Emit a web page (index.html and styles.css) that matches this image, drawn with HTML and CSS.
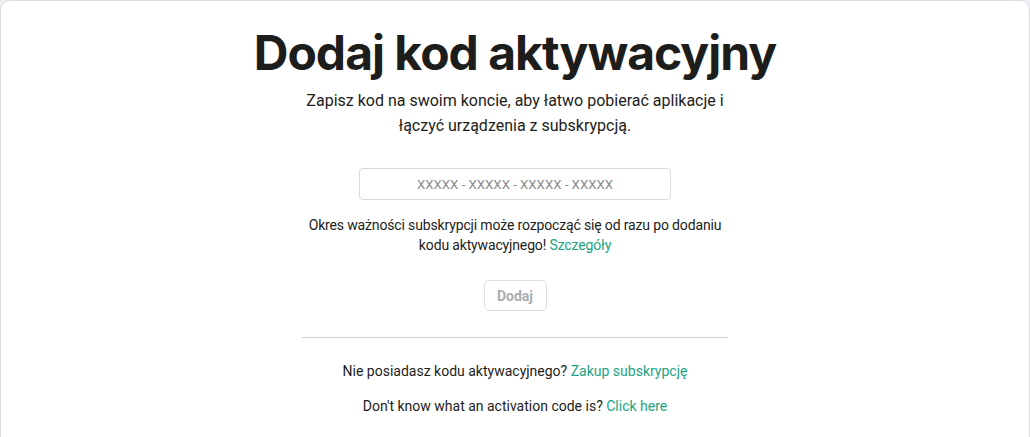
FILE: index.html
```html
<!DOCTYPE html>
<html lang="pl">
<head>
<meta charset="utf-8">
<title>Dodaj kod aktywacyjny</title>
<link rel="stylesheet" href="styles.css">
</head>
<body>
<main class="card">
  <h1 class="title">Dodaj kod aktywacyjny</h1>
  <p class="subtitle">Zapisz kod na swoim koncie, aby łatwo pobierać aplikacje i<br>łączyć urządzenia z subskrypcją.</p>
  <input class="code-input" type="text" placeholder="XXXXX - XXXXX - XXXXX - XXXXX">
  <p class="notice">Okres ważności subskrypcji może rozpocząć się od razu po dodaniu<br>kodu aktywacyjnego! <a class="link" href="#">Szczegóły</a></p>
  <button class="btn" type="button" disabled>Dodaj</button>
  <hr class="divider">
  <p class="info">Nie posiadasz kodu aktywacyjnego? <a class="link" href="#">Zakup subskrypcję</a></p>
  <p class="info">Don't know what an activation code is? <a class="link" href="#">Click here</a></p>
</main>
</body>
</html>
```
FILE: styles.css
```css
html, body {
  margin: 0;
  padding: 0;
  background: #eef0f3;
}
body {
  font-family: Roboto, "Liberation Sans", sans-serif;
  color: #1d1d1b;
}
.card {
  box-sizing: border-box;
  width: 1030px;
  min-height: 460px;
  background: #fff;
  border: 1px solid #dadee3;
  border-radius: 10px;
  display: flex;
  flex-direction: column;
  align-items: center;
  padding-top: 23px;
}
.title {
  margin: 0;
  font-family: Inter, "Noto Sans", sans-serif;
  font-weight: 700;
  font-size: 48px;
  line-height: 58px;
  letter-spacing: -1px;
  color: #1d1d1b;
}
.subtitle {
  margin: 6px 0 0;
  font-size: 16px;
  line-height: 25px;
  text-align: center;
  color: #1d1d1b;
}
.code-input {
  box-sizing: border-box;
  margin-top: 30px;
  width: 312px;
  height: 32px;
  border: 1px solid #d7dbe0;
  border-radius: 4px;
  text-align: center;
  font-family: Roboto, "Liberation Sans", sans-serif;
  font-size: 13.2px;
  color: #1d1d1b;
  outline: none;
}
.code-input::placeholder {
  color: #8a8a8a;
}
.notice {
  margin: 15px 0 0;
  font-size: 14px;
  line-height: 20px;
  letter-spacing: -0.15px;
  text-align: center;
}
.link {
  color: #1ba385;
  text-decoration: none;
}
.btn {
  margin-top: 25px;
  width: 63px;
  height: 31px;
  border: 1px solid #dcdee2;
  border-radius: 5px;
  background: #fff;
  font-family: Roboto, "Liberation Sans", sans-serif;
  font-weight: 700;
  font-size: 14px;
  color: #a9adb3;
  padding: 0;
}
.divider {
  margin: 26px 0 0;
  width: 426px;
  border: none;
  border-top: 1px solid #cfd1d4;
}
.info {
  margin: 24px 0 0;
  font-size: 14px;
  line-height: 18px;
  text-align: center;
}
.info + .info {
  margin-top: 17px;
}
```
